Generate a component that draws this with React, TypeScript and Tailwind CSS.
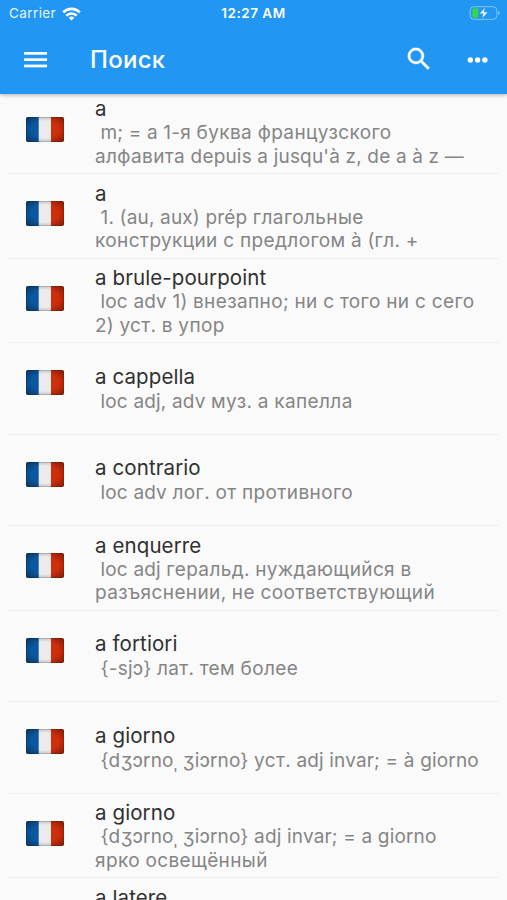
import React from 'react';

interface Entry {
  word: string;
  lines: string[];
}

const entries: Entry[] = [
  { word: 'a', lines: [' m; = a 1-я буква французского', "алфавита depuis a jusqu'à z, de a à z —"] },
  { word: 'a', lines: [' 1. (au, aux) prép глагольные', 'конструкции с предлогом à (гл. +'] },
  { word: 'a brule-pourpoint', lines: [' loc adv 1) внезапно; ни с того ни с сего', '2) уст. в упор'] },
  { word: 'a cappella', lines: [' loc adj, adv муз. а капелла'] },
  { word: 'a contrario', lines: [' loc adv лог. от противного'] },
  { word: 'a enquerre', lines: [' loc adj геральд. нуждающийся в', 'разъяснении, не соответствующий'] },
  { word: 'a fortiori', lines: [' {-sjɔ} лат. тем более'] },
  { word: 'a giorno', lines: [' {dʒɔrnoˌ ʒiɔrno} уст. adj invar; = à giorno'] },
  { word: 'a giorno', lines: [' {dʒɔrnoˌ ʒiɔrno} adj invar; = a giorno', 'ярко освещённый'] },
  { word: 'a latere', lines: [] },
];

const Flag = () => (
  <svg className="mt-[27px] ml-[18px] h-[25px] w-[38px] shrink-0" viewBox="0 0 38 25">
    <defs>
      <clipPath id="flagClip">
        <rect width="38" height="25" rx="2" />
      </clipPath>
      <radialGradient id="flagShade" cx="50%" cy="50%" r="70%">
        <stop offset="0.5" stopColor="#000" stopOpacity="0" />
        <stop offset="1" stopColor="#000" stopOpacity="0.4" />
      </radialGradient>
    </defs>
    <g clipPath="url(#flagClip)">
      <rect width="38" height="25" fill="#ebebeb" />
      <rect width="12.7" height="25" fill="#0b58a0" />
      <rect x="25" width="13" height="25" fill="#cf2e0b" />
      <rect width="38" height="25" fill="url(#flagShade)" />
      <rect x="0.5" y="0.5" width="37" height="24" rx="1.5" fill="none" stroke="#000" strokeOpacity="0.12" />
    </g>
  </svg>
);

const StatusBar = () => (
  <div className="flex h-[27px] items-center justify-between pr-[7px] pl-[9px] text-[13.5px] leading-none">
    <div className="flex w-[150px] items-center gap-[6px]">
      <span className="tracking-[0.4px] text-white/90">Carrier</span>
      <svg className="h-[14px] w-[19px]" viewBox="0 0 19 14" fill="none" stroke="#fff" strokeWidth="2.6">
        <path d="M1.2 5.3a11.8 11.8 0 0 1 16.6 0" />
        <path d="M4.3 8.6a7.4 7.4 0 0 1 10.4 0" />
        <path d="M9.5 13.6 6.6 10.8a4.2 4.2 0 0 1 5.8 0z" fill="#fff" stroke="none" />
      </svg>
    </div>
    <span className="-ml-[2px] font-semibold tracking-[0.5px]">12:27 AM</span>
    <div className="flex w-[150px] justify-end">
      <svg className="mb-px h-[14px] w-[31px]" viewBox="0 0 31 14">
        <rect x="1.2" y="0.7" width="26.6" height="12.6" rx="3.6" fill="none" stroke="#fff" strokeOpacity="0.45" />
        <path d="M29.3 4.8c1.8.6 1.8 3.8 0 4.4z" fill="#fff" fillOpacity="0.5" />
        <path d="M5 2.3h4.3v9.4H5a1.6 1.6 0 0 1-1.6-1.6V3.9A1.6 1.6 0 0 1 5 2.3z" fill="#32d74b" />
        <path d="M16.3 1.2 10.3 7.7h3.9l-1.4 5.1 6.2-6.7h-4z" fill="#fff" stroke="#2196f3" strokeWidth="0.5" />
      </svg>
    </div>
  </div>
);

const AppBar = () => (
  <div className="flex h-[65px] items-center pr-[18px] pl-[24px]">
    <svg className="h-[16px] w-[23px]" viewBox="0 0 23 16" fill="#fff">
      <rect y="0" width="23" height="2.7" />
      <rect y="6.3" width="23" height="2.7" />
      <rect y="12.6" width="23" height="2.7" />
    </svg>
    <h1 className="ml-[43px] flex-1 text-[24px] leading-none font-medium tracking-[0.3px]">Поиск</h1>
    <svg
      className="mr-[33px] mb-px h-[30px] w-[30px]"
      viewBox="0 0 24 24"
      fill="#fff"
      stroke="#fff"
      strokeWidth="0.3"
    >
      <path d="M15.5 14h-.79l-.28-.27A6.471 6.471 0 0 0 16 9.5 6.5 6.5 0 1 0 9.5 16c1.61 0 3.09-.59 4.23-1.57l.27.28v.79l5 4.99L20.49 19l-4.99-5zm-6 0C7.01 14 5 11.99 5 9.5S7.01 5 9.5 5 14 7.01 14 9.5 11.99 14 9.5 14z" />
    </svg>
    <svg className="h-[6px] w-[22px]" viewBox="0 0 22 6" fill="#fff">
      <circle cx="3.3" cy="3" r="2.7" />
      <circle cx="10.6" cy="3" r="2.7" />
      <circle cx="17.9" cy="3" r="2.7" />
    </svg>
  </div>
);

// Cyrillic runs are set slightly looser than the Latin ones
const Definition = ({ text }: { text: string }) => (
  <div className="text-[19px] leading-[23.3px] tracking-[0.17px] text-[#858585]">
    {text.split(/([а-яё]+)/i).map((part, i) =>
      i % 2 === 1 ? (
        <span key={i} className="tracking-[0.38px]">
          {part}
        </span>
      ) : (
        part
      )
    )}
  </div>
);

const Row = ({ entry }: { entry: Entry }) => {
  const tall = entry.lines.length === 1;
  return (
    <li className={`mr-[7px] ml-2 flex shrink-0 border-b border-[#f0f0f0] ${tall ? 'h-[91.5px]' : 'h-[84.5px]'}`}>
      <Flag />
      <div className={`ml-[31px] whitespace-pre ${tall ? 'pt-[20.5px]' : 'pt-[7.5px]'}`}>
        <div className={`text-[20.5px] tracking-[0.1px] text-[#303030] ${tall ? 'leading-[26px]' : 'leading-[24px]'}`}>
          {entry.word}
        </div>
        {entry.lines.map((line) => (
          <Definition key={line} text={line} />
        ))}
      </div>
    </li>
  );
};

export default function App() {
  return (
    <div className="flex h-[900px] w-[507px] flex-col overflow-hidden bg-[#fafafa] font-['Inter','Noto_Sans',sans-serif]">
      <header className="relative z-10 h-[94px] shrink-0 bg-[#2196f3] text-white shadow-[0_1px_4px_rgba(0,0,0,0.3)]">
        <StatusBar />
        <AppBar />
      </header>
      <ul className="-mt-[4.3px] flex min-h-0 flex-1 flex-col overflow-hidden">
        {entries.map((entry, i) => (
          <Row key={i} entry={entry} />
        ))}
      </ul>
    </div>
  );
}
